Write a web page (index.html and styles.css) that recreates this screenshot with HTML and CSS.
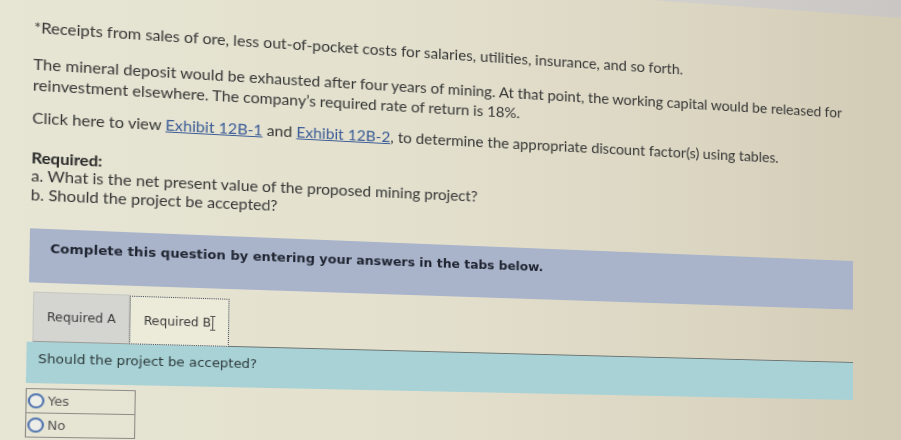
FILE: index.html
```html
<!DOCTYPE html>
<html lang="en">
<head>
<meta charset="utf-8">
<title>Mining project</title>
<link rel="stylesheet" href="styles.css">
</head>
<body>
<div class="page">
  <div class="content">
    <p class="note">*Receipts from sales of ore, less out-of-pocket costs for salaries, utilities, insurance, and so forth.</p>
    <p class="para first">The mineral deposit would be exhausted after four years of mining. At that point, the working capital would be released for<br>reinvestment elsewhere. The company’s required rate of return is 18%.</p>
    <p class="para second">Click here to view <a href="#" class="link">Exhibit 12B-1</a> and <a href="#" class="link">Exhibit 12B-2</a>, to determine the appropriate discount factor(s) using tables.</p>
    <div class="req">
      <div class="req-title">Required:</div>
      <div>a. What is the net present value of the proposed mining project?</div>
      <div>b. Should the project be accepted?</div>
    </div>
    <div class="prompt">Complete this question by entering your answers in the tabs below.</div>
    <div class="tabs">
      <div class="tab tab-a">Required A</div>
      <div class="tab tab-b">Required B<span class="ibeam"></span></div>
      <div class="tab-fill"></div>
    </div>
    <div class="question">Should the project be accepted?</div>
    <div class="options">
      <div class="option"><span class="radio"></span><span class="opt-label">Yes</span></div>
      <div class="option"><span class="radio"></span><span class="opt-label">No</span></div>
    </div>
  </div>
</div>
</body>
</html>
```
FILE: styles.css
```css
html, body {
  margin: 0;
  padding: 0;
  width: 901px;
  height: 440px;
  overflow: hidden;
}
body {
  position: relative;
  background: linear-gradient(to right, #e7e5d4 0%, #e3e0cd 45%, #dcd7c3 75%, #d2cbb6 100%);
}
body::before {
  content: "";
  position: absolute;
  left: 650px;
  top: 0;
  width: 251px;
  height: 18px;
  background: linear-gradient(to right, #d3d1cd, #c9c6c4);
  clip-path: polygon(0 0, 100% 0, 100% 100%);
}
.page {
  width: 901px;
  height: 440px;
  transform-origin: 0 0;
  transform: matrix3d(1.114490, 0.075680, 0, 0.00013791, -0.020448, 0.994975, 0, -0.000023971, 0, 0, 1, 0, -4.29327, -2.39170, 0, 1);
}
.content {
  margin-left: 35px;
  width: 825px;
  color: #363636;
  font-family: Lato, "Liberation Sans", Arial, sans-serif;
  font-size: 15.2px;
}
.note {
  margin: 0;
  padding-top: 16.5px;
  line-height: 21px;
  white-space: nowrap;
}
.para {
  margin: 0;
  line-height: 21px;
  white-space: nowrap;
}
.para.first { margin-top: 16.5px; }
.para.second { margin-top: 11.5px; }
.link {
  color: #3a5b96;
  text-decoration: underline;
}
.req {
  margin-top: 20.25px;
  line-height: 18.5px;
}
.req-title { font-weight: 700; color: #262626; }
.prompt {
  margin-top: 24.75px;
  height: 54px;
  box-sizing: border-box;
  padding: 11.5px 0 0 18.5px;
  background: #a9b4cb;
  font-family: "DejaVu Sans", Verdana, sans-serif;
  font-weight: 700;
  font-size: 12.4px;
  line-height: 16px;
  color: #1f2430;
}
.tabs {
  margin-top: 9px;
  margin-left: 4px;
  height: 50px;
  display: flex;
  font-family: "DejaVu Sans", Verdana, sans-serif;
  font-size: 11.5px;
  color: #3a3a3a;
}
.tab {
  box-sizing: border-box;
  display: flex;
  align-items: center;
  justify-content: center;
}
.tab-a {
  width: 88px;
  background: #d4d5d0;
  border: 1px solid #c6c7c1;
  border-bottom: 1px solid #9a9c98;
}
.tab-b {
  width: 93px;
  margin-top: 1px;
  background: #ecebda;
  border: 1px dotted #3f4656;
}
.ibeam {
  display: inline-block;
  width: 5px;
  height: 15px;
  margin-left: -1px;
  position: relative;
  top: 1px;
  border-top: 1px solid #555;
  border-bottom: 1px solid #555;
  box-sizing: border-box;
  background: linear-gradient(#555, #555) no-repeat 2px 0 / 1px 100%;
}
.tab-fill {
  flex: 1;
  border-bottom: 1px solid #6e7472;
}
.question {
  margin-left: -1px;
  width: 826px;
  height: 41px;
  box-sizing: border-box;
  padding: 10px 0 0 10.5px;
  background: #a8d2d5;
  font-family: "DejaVu Sans", Verdana, sans-serif;
  font-size: 12.5px;
  line-height: 14px;
  color: #2e3a3c;
}
.options {
  margin-top: 5px;
  margin-left: -1px;
  width: 98px;
  border: 1px solid #8c8c86;
  border-bottom: none;
  font-family: "DejaVu Sans", Verdana, sans-serif;
  font-size: 12px;
  color: #555;
}
.option {
  height: 24px;
  box-sizing: border-box;
  border-bottom: 1px solid #8c8c86;
  display: flex;
  align-items: center;
  padding-left: 1px;
}
.radio {
  width: 15px;
  height: 15px;
  box-sizing: border-box;
  border: 2px solid #5075b0;
  border-radius: 50%;
  background: #eeeee8;
  margin-right: 3px;
}
.opt-label { line-height: 14px; }
```
